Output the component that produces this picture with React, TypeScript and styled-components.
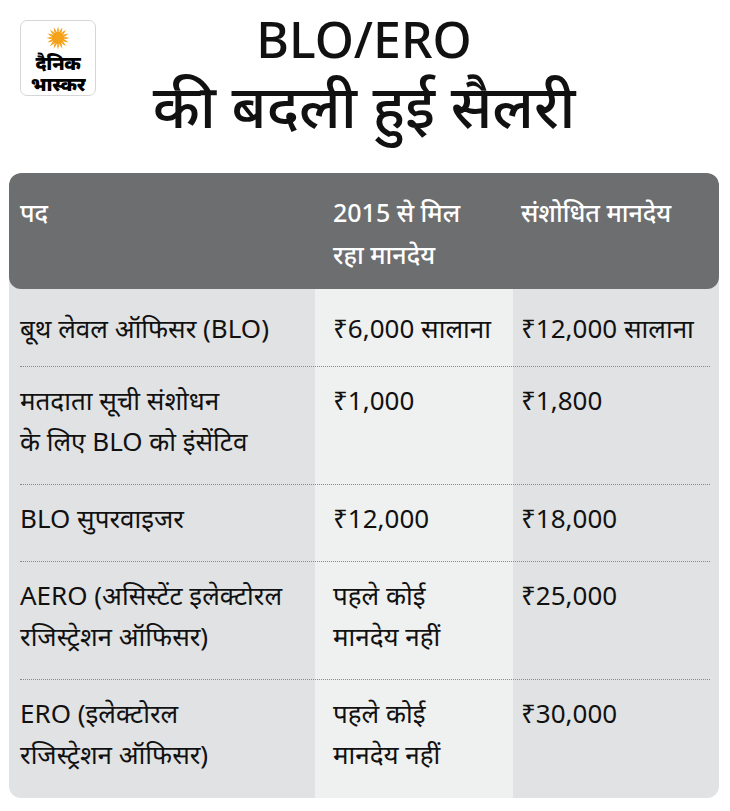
import React from "react";
import styled, { createGlobalStyle } from "styled-components";

const GlobalStyle = createGlobalStyle`
  html, body {
    margin: 0;
    padding: 0;
    background: #ffffff;
  }
  body {
    font-family: "Noto Sans", "Noto Sans Devanagari", "Lohit Devanagari", sans-serif;
    color: #111111;
  }
`;

interface TRow {
  post: string[];
  old: string[];
  revised: string[];
}

const rows: TRow[] = [
  { post: ["बूथ लेवल ऑफिसर (BLO)"], old: ["₹6,000 सालाना"], revised: ["₹12,000 सालाना"] },
  {
    post: ["मतदाता सूची संशोधन", "के लिए BLO को इंसेंटिव"],
    old: ["₹1,000"],
    revised: ["₹1,800"],
  },
  { post: ["BLO सुपरवाइजर"], old: ["₹12,000"], revised: ["₹18,000"] },
  {
    post: ["AERO (असिस्टेंट इलेक्टोरल", "रजिस्ट्रेशन ऑफिसर)"],
    old: ["पहले कोई", "मानदेय नहीं"],
    revised: ["₹25,000"],
  },
  {
    post: ["ERO (इलेक्टोरल", "रजिस्ट्रेशन ऑफिसर)"],
    old: ["पहले कोई", "मानदेय नहीं"],
    revised: ["₹30,000"],
  },
];

const SunLogo = () => {
  const rays = Array.from({ length: 16 }, (_, i) => (i * 360) / 16);
  return (
    <svg width="26" height="26" viewBox="-13 -13 26 26">
      {rays.map((a) => (
        <polygon
          key={a}
          points="-1.3,-7 1.3,-7 0,-12.5"
          fill="#f6a11a"
          transform={`rotate(${a})`}
        />
      ))}
      <circle r="7" fill="#f6a11a" />
    </svg>
  );
};

const Lines: React.FC<{ lines: string[] }> = ({ lines }) => (
  <>
    {lines.map((l, i) => (
      <Line key={i}>{l}</Line>
    ))}
  </>
);

const App = () => {
  return (
    <Page>
      <GlobalStyle />
      <Top>
        <LogoBox>
          <SunLogo />
          <LogoText>
            <Line>दैनिक</Line>
            <Line>भास्कर</Line>
          </LogoText>
        </LogoBox>
        <Title>
          <TitleLine $size={50} $height={64}>
            BLO/ERO
          </TitleLine>
          <TitleLine $size={60} $height={68}>
            की बदली हुई सैलरी
          </TitleLine>
        </Title>
        <span />
      </Top>
      <Table>
        <HeadRow>
          <HeadCell>पद</HeadCell>
          <HeadCell $pad={18}>
            <Line>2015 से मिल</Line>
            <Line>रहा मानदेय</Line>
          </HeadCell>
          <HeadCell $pad={8}>संशोधित मानदेय</HeadCell>
        </HeadRow>
        {rows.map((r, i) => (
          <Row key={i} $first={i === 0} $last={i === rows.length - 1}>
            <Cell>
              <Lines lines={r.post} />
            </Cell>
            <Cell $pad={18} $light>
              <Lines lines={r.old} />
            </Cell>
            <Cell $pad={8}>
              <Lines lines={r.revised} />
            </Cell>
          </Row>
        ))}
      </Table>
    </Page>
  );
};

const Page = styled.div`
  width: 730px;
  height: 811px;
  box-sizing: border-box;
  padding: 7px 11px 0 9px;
`;

const Top = styled.header`
  display: grid;
  grid-template-columns: 1fr auto 1fr;
  align-items: start;
`;

const LogoBox = styled.div`
  justify-self: start;
  margin: 13px 0 0 11px;
  width: 76px;
  height: 76px;
  box-sizing: border-box;
  border: 1px solid #d6d6d6;
  border-radius: 7px;
  display: flex;
  flex-direction: column;
  align-items: center;
  padding-top: 5px;
`;

const LogoText = styled.div`
  font-weight: 900;
  font-size: 19px;
  line-height: 21px;
  text-align: center;
  color: #000;
  margin-top: 3px;
  letter-spacing: -0.3px;
`;

const Line = styled.div`
  white-space: nowrap;
`;

const Title = styled.h1`
  margin: 0;
  text-align: center;
  font-weight: 500;
  color: #111;
`;

const TitleLine = styled.div<{ $size: number; $height: number }>`
  font-size: ${(p) => p.$size}px;
  line-height: ${(p) => p.$height}px;
  white-space: nowrap;
`;

const Table = styled.div`
  margin-top: 34px;
  border-radius: 12px;
  overflow: hidden;
  background: #e1e2e3;
`;

const HeadRow = styled.div`
  display: grid;
  grid-template-columns: 306px 198px 1fr;
  background: #6d6e70;
  color: #ffffff;
  border-radius: 12px;
  padding: 16px 0 14px;
`;

const HeadCell = styled.div<{ $pad?: number }>`
  padding-left: ${(p) => p.$pad ?? 11}px;
  font-size: 25px;
  font-weight: 500;
  line-height: 42px;
  margin-top: 2px;
`;

const Row = styled.div<{ $first?: boolean; $last?: boolean }>`
  display: grid;
  grid-template-columns: 306px 198px 1fr;
  position: relative;

  &::after {
    content: "";
    display: ${(p) => (p.$last ? "none" : "block")};
    position: absolute;
    left: 11px;
    right: 9px;
    bottom: 0;
    border-top: 1px dotted #8a8a8a;
  }

  & > div {
    padding-top: ${(p) => (p.$first ? 19 : 13)}px;
    padding-bottom: ${(p) => (p.$first ? 18 : 23)}px;
  }
`;

const Cell = styled.div<{ $pad?: number; $light?: boolean }>`
  padding-left: ${(p) => p.$pad ?? 11}px;
  background: ${(p) => (p.$light ? "#eff0f0" : "transparent")};
  font-size: 26px;
  line-height: 41px;
  color: #111;
`;

export default App;
